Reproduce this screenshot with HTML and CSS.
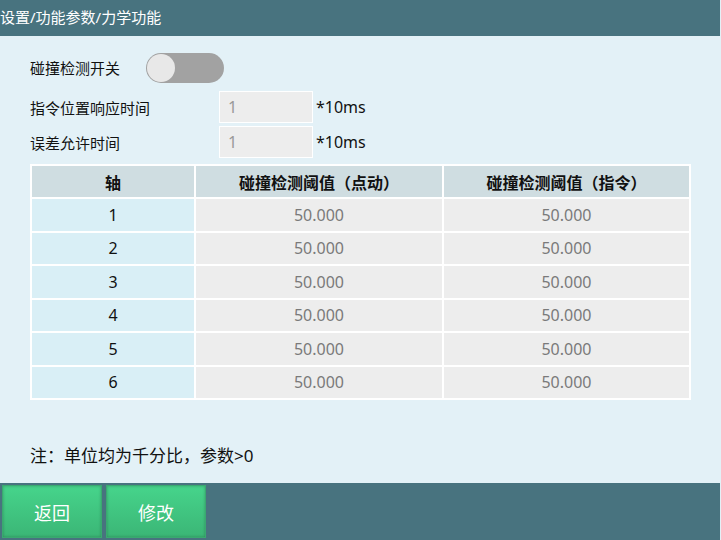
FILE: index.html
```html
<!DOCTYPE html>
<html lang="zh-CN">
  <head>
    <meta charset="UTF-8" />
    <title>力学功能</title>
    <link rel="stylesheet" href="styles.css">
  </head>
  <body>
    <div class="title-bar">设置/功能参数/力学功能</div>

    <div class="content">
      <div class="switch-row">
        <span class="label switch-label">碰撞检测开关</span>
        <div class="toggle"><div class="knob"></div></div>
      </div>

      <div class="field-row first">
        <span class="label field-label">指令位置响应时间</span>
        <div class="input">1</div>
        <span class="unit">*10ms</span>
      </div>
      <div class="field-row">
        <span class="label field-label">误差允许时间</span>
        <div class="input">1</div>
        <span class="unit">*10ms</span>
      </div>

      <table class="grid">
        <thead>
          <tr>
            <th class="col-axis">轴</th>
            <th class="col-jog">碰撞检测阈值（点动）</th>
            <th>碰撞检测阈值（指令）</th>
          </tr>
        </thead>
        <tbody>
          <tr><td class="axis">1</td><td>50.000</td><td>50.000</td></tr>
          <tr><td class="axis">2</td><td>50.000</td><td>50.000</td></tr>
          <tr><td class="axis">3</td><td>50.000</td><td>50.000</td></tr>
          <tr><td class="axis">4</td><td>50.000</td><td>50.000</td></tr>
          <tr><td class="axis">5</td><td>50.000</td><td>50.000</td></tr>
          <tr><td class="axis">6</td><td>50.000</td><td>50.000</td></tr>
        </tbody>
      </table>

      <div class="note">注：单位均为千分比，参数&gt;0</div>
    </div>

    <div class="footer">
      <button class="btn">返回</button>
      <button class="btn">修改</button>
    </div>
  </body>
</html>
```

FILE: styles.css
```css
html, body {
  margin: 0;
  padding: 0;
}

body {
  width: 720px;
  height: 540px;
  display: flex;
  flex-direction: column;
  font-family: "Noto Sans", "Noto Sans CJK SC", sans-serif;
  background-color: #e3f1f7;
  color: #111;
}

.title-bar {
  height: 36px;
  line-height: 34px;
  background-color: #48737f;
  color: #fff;
  font-size: 15px;
  flex: none;
}

.content {
  flex: 1;
  padding: 16px 30px 0 30px;
  display: flex;
  flex-direction: column;
}

.label {
  font-size: 15px;
}

.switch-row {
  display: flex;
  align-items: center;
  height: 31px;
}

.switch-label {
  width: 116px;
}

.toggle {
  width: 78px;
  height: 30px;
  border-radius: 15px;
  background-color: #a2a2a2;
  display: flex;
  align-items: center;
  padding-left: 1px;
  box-sizing: border-box;
}

.knob {
  width: 28px;
  height: 28px;
  border-radius: 50%;
  background-color: #e8e8e8;
}

.field-row {
  display: flex;
  align-items: center;
  height: 32px;
  margin-top: 3px;
}

.field-row.first {
  margin-top: 8px;
}

.field-label {
  width: 189px;
}

.input {
  width: 94px;
  height: 32px;
  box-sizing: border-box;
  border: 1px solid #fff;
  background-color: #ededed;
  color: #999;
  font-size: 16px;
  line-height: 30px;
  padding-left: 8px;
}

.unit {
  margin-left: 3px;
  font-size: 16px;
}

.grid {
  margin-top: 6px;
  width: 661px;
  border-collapse: collapse;
  border: 2px solid #fff;
  font-size: 16px;
  text-align: center;
}

.grid th,
.grid td {
  border: 2px solid #fff;
  height: 31.5px;
  padding: 0;
}

.grid th {
  background-color: #cfdde1;
  font-weight: bold;
  height: 31px;
}

.col-axis {
  width: 162px;
}

.col-jog {
  width: 246px;
}

.grid td {
  background-color: #ededed;
  color: #7a7a7a;
}

.grid td.axis {
  background-color: #d9eff6;
  color: #111;
}

.note {
  margin-top: 42px;
  font-size: 17px;
}

.footer {
  height: 57px;
  flex: none;
  background-color: #48737f;
  display: flex;
  align-items: center;
  gap: 4px;
  padding-left: 2px;
}

.btn {
  width: 100px;
  height: 53px;
  border: 1px solid #3aa870;
  background: linear-gradient(#46d48b, #3bb676);
  box-shadow: inset 0 0 3px rgba(0, 0, 0, 0.25);
  color: #fff;
  font-family: "Noto Sans CJK SC", sans-serif;
  font-size: 18px;
  padding: 0;
}
```
